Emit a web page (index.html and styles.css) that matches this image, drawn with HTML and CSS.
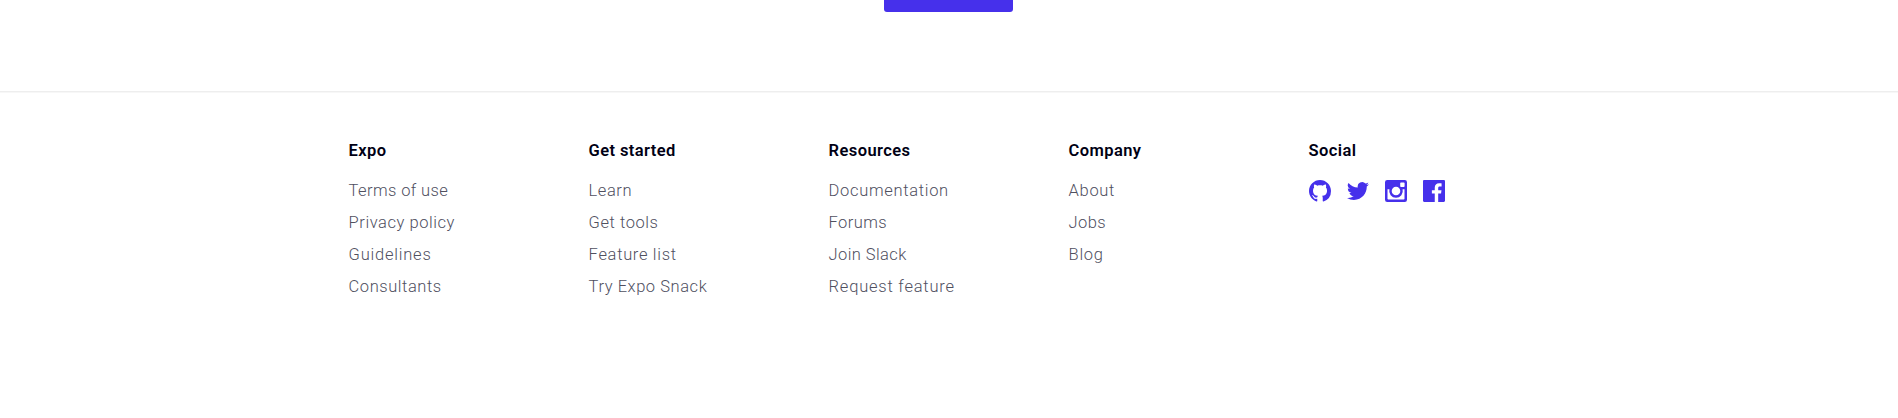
FILE: index.html
```html
<!DOCTYPE html>
<html lang="en">
<head>
<meta charset="utf-8">
<title>Expo</title>
<link rel="stylesheet" href="styles.css">
</head>
<body>
<main class="page-end"><div class="button"></div></main>
<footer class="footer">
  <div class="columns">
    <section class="column">
      <h2 class="heading">Expo</h2>
      <a class="link snug">Terms of use</a>
      <a class="link">Privacy policy</a>
      <a class="link wider">Guidelines</a>
      <a class="link">Consultants</a>
    </section>
    <section class="column">
      <h2 class="heading">Get started</h2>
      <a class="link">Learn</a>
      <a class="link">Get tools</a>
      <a class="link wide">Feature list</a>
      <a class="link">Try Expo Snack</a>
    </section>
    <section class="column">
      <h2 class="heading">Resources</h2>
      <a class="link wide">Documentation</a>
      <a class="link snug">Forums</a>
      <a class="link snug">Join Slack</a>
      <a class="link wider">Request feature</a>
    </section>
    <section class="column">
      <h2 class="heading">Company</h2>
      <a class="link wide">About</a>
      <a class="link snug">Jobs</a>
      <a class="link wide">Blog</a>
    </section>
    <section class="column">
      <h2 class="heading">Social</h2>
      <div class="social">
        <svg class="icon" viewBox="0 0 16 16"><path d="M8 0C3.58 0 0 3.58 0 8c0 3.54 2.29 6.53 5.47 7.59.4.07.55-.17.55-.38 0-.19-.01-.82-.01-1.49-2.01.37-2.53-.49-2.69-.94-.09-.23-.48-.94-.82-1.13-.28-.15-.68-.52-.01-.53.63-.01 1.08.58 1.23.82.72 1.21 1.87.87 2.33.66.07-.52.28-.87.51-1.07-1.78-.2-3.64-.89-3.64-3.95 0-.87.31-1.59.82-2.15-.08-.2-.36-1.02.08-2.12 0 0 .67-.21 2.2.82.64-.18 1.32-.27 2-.27s1.36.09 2 .27c1.53-1.04 2.2-.82 2.2-.82.44 1.1.16 1.92.08 2.12.51.56.82 1.27.82 2.15 0 3.07-1.87 3.75-3.65 3.95.29.25.54.73.54 1.48 0 1.07-.01 1.93-.01 2.2 0 .21.15.46.55.38A8.01 8.01 0 0 0 16 8c0-4.42-3.58-8-8-8z"/></svg>
        <svg class="icon" viewBox="0 0 24 24"><path d="M23.95 4.57a10 10 0 0 1-2.82.77 4.96 4.96 0 0 0 2.16-2.72c-.95.55-2 .95-3.13 1.18a4.92 4.92 0 0 0-8.38 4.48C7.69 8.1 4.07 6.13 1.64 3.16a4.92 4.92 0 0 0 1.52 6.57 4.9 4.9 0 0 1-2.23-.61v.06a4.92 4.92 0 0 0 3.95 4.83 5 5 0 0 1-2.21.08 4.94 4.94 0 0 0 4.6 3.42A9.87 9.87 0 0 1 0 19.54a13.99 13.99 0 0 0 7.55 2.21c9.05 0 14-7.5 14-13.98 0-.21 0-.42-.02-.63a9.94 9.94 0 0 0 2.42-2.57z"/></svg>
        <svg class="icon" viewBox="0 0 22 22"><path fill-rule="evenodd" d="M2.2 0h17.6A2.2 2.2 0 0 1 22 2.2v17.6a2.2 2.2 0 0 1-2.2 2.2H2.2A2.2 2.2 0 0 1 0 19.8V2.2A2.2 2.2 0 0 1 2.2 0ZM16 2.5a.8.8 0 0 0-.8.8v2.9c0 .4.4.8.8.8h2.8c.4 0 .8-.4.8-.8V3.3a.8.8 0 0 0-.8-.8ZM2.5 9.3v9.4c0 .5.4.8.8.8h15.4c.5 0 .8-.3.8-.8V9.3h-1.9a6.8 6.8 0 1 1-13.2 0ZM11 6.7a4.3 4.3 0 1 0 0 8.6 4.3 4.3 0 0 0 0-8.6Z"/></svg>
        <svg class="icon" viewBox="0 0 24 24"><path d="M22.68 0H1.32C.59 0 0 .59 0 1.32v21.36C0 23.41.59 24 1.32 24h11.5v-9.29H9.69v-3.62h3.13V8.41c0-3.1 1.89-4.79 4.66-4.79 1.32 0 2.46.1 2.79.14v3.24h-1.91c-1.5 0-1.79.71-1.79 1.76v2.31h3.58l-.46 3.62h-3.12V24h6.11c.73 0 1.32-.59 1.32-1.32V1.32C24 .59 23.41 0 22.68 0z"/></svg>
      </div>
    </section>
  </div>
</footer>
</body>
</html>
```
FILE: styles.css
```css
body {
  margin: 0;
  background: #fff;
  font-family: Roboto, "Liberation Sans", sans-serif;
  overflow: hidden;
}
.page-end {
  display: flex;
  justify-content: center;
  align-items: flex-start;
  height: 91px;
}
.button {
  width: 129px;
  height: 12px;
  margin-right: 1px;
  border-radius: 0 0 3px 3px;
  background: #4630eb;
}
.footer {
  border-top: 1px solid #eee;
  box-shadow: inset 0 1px #f7f7f7;
  padding-top: 47px;
}
.columns {
  display: grid;
  grid-template-columns: repeat(5, 240px);
  width: 1200px;
  margin: 0 auto;
}
.column {
  display: flex;
  flex-direction: column;
  align-items: flex-start;
}
.heading {
  margin: 0 0 12px -0.4px;
  font-size: 16.5px;
  line-height: 24px;
  font-weight: 600;
  letter-spacing: 0.4px;
  color: #000014;
}
.link {
  margin-left: -0.4px;
  font-size: 16.5px;
  line-height: 32px;
  font-weight: 300;
  letter-spacing: 0.55px;
  color: #50505f;
}
.snug {
  letter-spacing: 0.4px;
}
.wide {
  letter-spacing: 0.68px;
}
.wider {
  letter-spacing: 0.78px;
}
.social {
  display: flex;
  gap: 16px;
  padding-top: 5px;
}
.icon {
  display: block;
  width: 22px;
  height: 22px;
  fill: #4630eb;
}
```
